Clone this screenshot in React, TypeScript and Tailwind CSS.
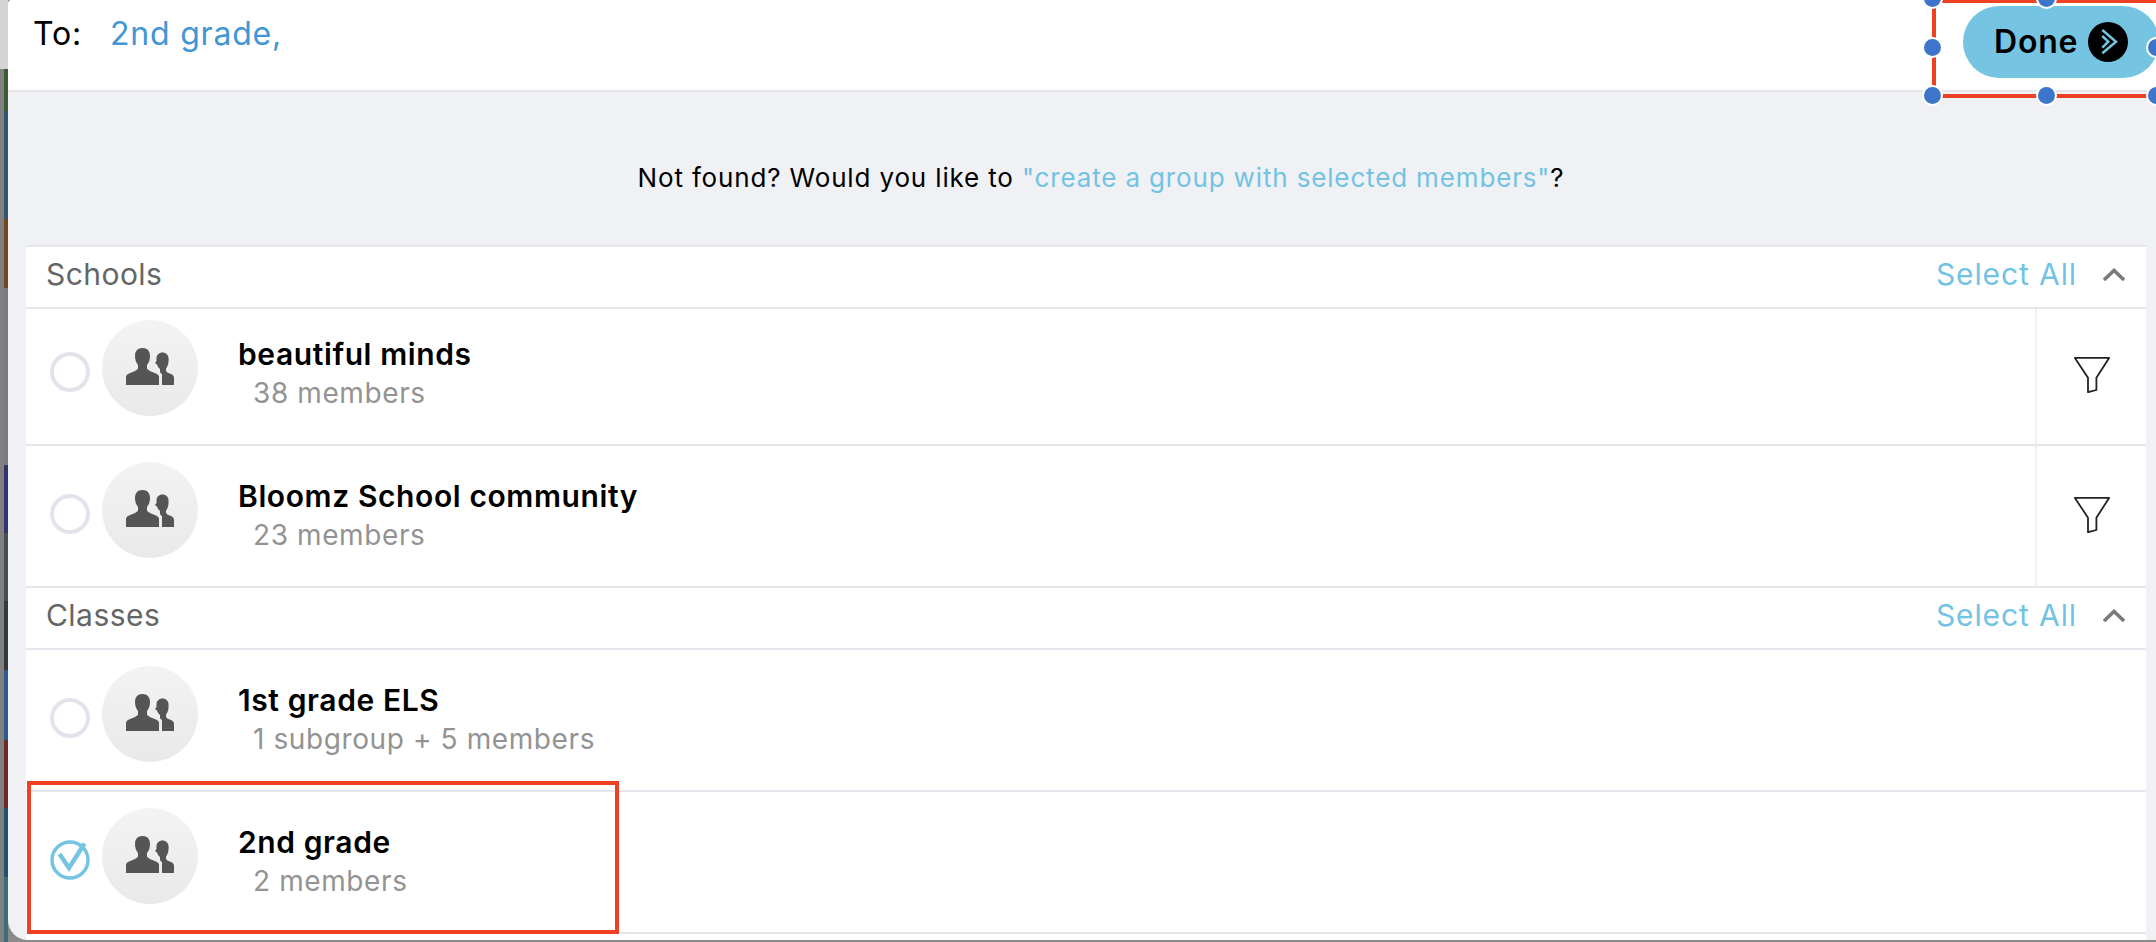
import React from 'react'

const stripe = [
  ['h-[69px]', 'bg-[#d4d4d4]'],
  ['h-[42px]', 'bg-[#3f5a35]'],
  ['h-[108px]', 'bg-[#34556f]'],
  ['h-[69px]', 'bg-[#6e4a22]'],
  ['h-[177px]', 'bg-[#7c7c7c]'],
  ['h-[68px]', 'bg-[#2f3570]'],
  ['h-[68px]', 'bg-[#454f50]'],
  ['h-[69px]', 'bg-[#33383c]'],
  ['h-[70px]', 'bg-[#2f5b8c]'],
  ['h-[68px]', 'bg-[#6d2a28]'],
  ['h-[69px]', 'bg-[#24506f]'],
  ['flex-1', 'bg-[#3a6d78]'],
]

const GroupIcon = () => (
  <svg width="48" height="37" viewBox="0 0 48 37" fill="#555" className="mt-[28px]">
    <path d="M16.500 0C11.500 0 9 3.500 9 8c0 3.500 1 6.500 3 9v3c0 2-4 3.500-9 5.500C1 26.500 0 27.500 0 29v8h33v-8c0-1.500-1-2.500-3-3.500-5-2-9-3.500-9-5.500v-3c2-2.500 3-5.500 3-9 0-4.500-2.500-8-7.500-8z" />
    <path d="M36.500 4.500c-3.500 0-6 2.500-6 6V13L29 15l2 1.500c.5 2 2 3.500 3 4.500v2.500c0 1 .7 1.800 2 2.500v11h12v-7c0-2-1-3-3-4-3-1-5-2-5-3.500v-2c2-2 2.600-5.500 2.600-9.500 0-4-2.600-6.500-6.100-6.500z" />
  </svg>
)

const Funnel = () => (
  <svg width="36" height="36" viewBox="0 0 36 36" fill="none" stroke="#222" strokeWidth="1.800" strokeLinejoin="round">
    <path d="M.9.9h34.200L22.400 20.700V33L14 35.200V20.700z" />
  </svg>
)

const Chevron = () => (
  <svg width="22" height="13" viewBox="0 0 22 13" fill="none" stroke="#7a7a7a" strokeWidth="3.500">
    <path d="M1 12 11 2.500 21 12" />
  </svg>
)

const Check = ({ checked }: { checked: boolean }) =>
  checked ? (
    <svg width="40" height="40" viewBox="0 0 40 40" fill="none" stroke="#74c4e2" className="shrink-0 mt-[32px]">
      <circle cx="20" cy="20" r="18" strokeWidth="3.500" />
      <path d="M9.500 14 19 28 34.500 3.500" strokeWidth="4.500" />
    </svg>
  ) : (
    <div className="w-10 h-10 mt-[32px] shrink-0 rounded-full border-[4px] border-[#e3e3ec]" />
  )

const Row = ({ name, sub, checked = false, filter = false, h, pt }: { name: string; sub: string; checked?: boolean; filter?: boolean; h: string; pt: string }) => (
  <div className={`flex items-stretch border-b-2 border-[#e5e5ec] ${h}`}>
    <div className={`flex flex-1 items-start pl-6 ${pt}`}>
      <Check checked={checked} />
      <div className="ml-3 w-24 h-24 shrink-0 rounded-full flex justify-center bg-gradient-to-b from-[#f3f3f3] to-[#e9e9e9]">
        <GroupIcon />
      </div>
      <div className="ml-10 mt-[15px] flex flex-col">
        <div className="text-[30px] leading-[39px] font-semibold text-black tracking-[0.6px]">{name}</div>
        <div className="pl-[15px] text-[28px] leading-[39px] text-[#939393] tracking-[0.6px]">{sub}</div>
      </div>
    </div>
    {filter && (
      <div className="w-[111px] border-l-2 border-[#f0f0f3] flex items-center justify-center pb-[3px]">
        <Funnel />
      </div>
    )}
  </div>
)

const SectionHead = ({ title }: { title: string }) => (
  <div className="h-[62px] flex items-center justify-between pl-5 pr-[21px] pb-[5px] border-b-2 border-[#e5e5ec]">
    <span className="text-[30px] text-[#666666] tracking-[0.45px]">{title}</span>
    <span className="flex items-center gap-[26px]">
      <span className="text-[30px] text-[#72c3e3] tracking-[0.9px]">Select All</span>
      <Chevron />
    </span>
  </div>
)

const Handle = ({ className }: { className: string }) => (
  <div className={`absolute w-[17px] h-[17px] rounded-full bg-[#3c75c9] ring-2 ring-white ${className}`} />
)

export default function App() {
  return (
    <div className="w-[2156px] h-[942px] overflow-hidden relative flex bg-[#8a8a8a] font-['Inter','Liberation_Sans',sans-serif]">
      {/* desktop showing behind the window */}
      <div className="w-2 h-full flex shrink-0">
        <div className="w-1 flex flex-col">
          <div className="h-[69px] bg-[#d4d4d4]" />
          <div className="flex-1 bg-[#808080]" />
        </div>
        <div className="w-1 flex flex-col">
          {stripe.map(([h, bg], i) => (
            <div key={i} className={`${h} ${bg}`} />
          ))}
        </div>
      </div>
      <div className="relative flex-1 h-[940px] bg-[#f0f1f4] rounded-bl-[20px] rounded-tl-[4px] flex flex-col">
        <div className="h-[92px] bg-white rounded-tl-[4px] border-b-2 border-[#e5e5e8] flex items-start pl-[25px] pt-[10px] text-[32px] tracking-[0.8px] shrink-0">
          <span className="text-black">To:</span>
          <span className="ml-7 text-[#4097d3]">2nd grade,</span>
        </div>
        <div className="h-[153px] shrink-0 flex items-center justify-center text-[26px] tracking-[0.85px] text-black pt-[18px] pl-[38px]">
          <span>
            Not found? Would you like to <span className="text-[#72c3e3]">"create a group with selected members"</span>?
          </span>
        </div>
        <div className="ml-[18px] mr-[10px] bg-white border-t-2 border-[#e5e5ec] flex-1">
          <SectionHead title="Schools" />
          <Row name="beautiful minds" sub="38 members" filter h="h-[137px]" pt="pt-[11px]" />
          <Row name="Bloomz School community" sub="23 members" filter h="h-[142px]" pt="pt-4" />
          <SectionHead title="Classes" />
          <Row name="1st grade ELS" sub="1 subgroup + 5 members" h="h-[142px]" pt="pt-4" />
          <Row name="2nd grade" sub="2 members" checked h="h-[142px]" pt="pt-4" />
        </div>
      </div>

      {/* annotations drawn over the screenshot */}
      <div className="absolute left-[27px] top-[781px] w-[592px] h-[153px] border-[4px] border-[#ee4023]" />
      <div className="absolute left-[1963px] top-[6px] w-[196px] h-[72px] rounded-[36px] bg-[#74c4e2] flex items-center pl-[31px] gap-[10px]">
        <span className="text-[32px] font-semibold text-black tracking-[0.8px]">Done</span>
        <span className="w-10 h-10 rounded-full bg-black flex items-center justify-center">
          <svg width="40" height="40" viewBox="0 0 40 40" fill="none" stroke="#74c4e2" strokeWidth="2.500">
            <path d="M14.300 8 28 19.700 14.300 31.300M14.300 14l6 5.700-6 6" />
          </svg>
        </span>
      </div>
      <div className="absolute left-[1932px] top-[-1px] w-[240px] h-[99px] border-[4px] border-[#ee4023]">
        <Handle className="left-[-12px] top-[-13px]" />
        <Handle className="left-[102px] top-[-13px]" />
        <Handle className="left-[-12px] top-[36px]" />
        <Handle className="left-[-12px] top-[84px]" />
        <Handle className="left-[102px] top-[84px]" />
        <Handle className="left-[212px] top-[36px]" />
        <Handle className="left-[212px] top-[84px]" />
      </div>
    </div>
  )
}
